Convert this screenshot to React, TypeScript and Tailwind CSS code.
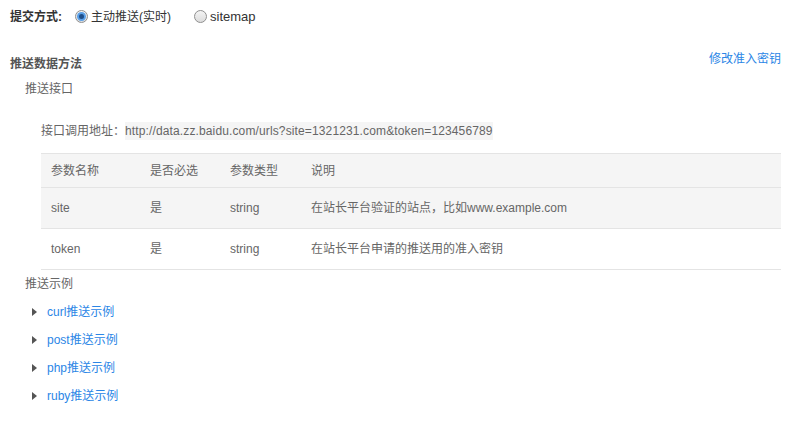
import React from "react";

const font = { fontFamily: '"Liberation Sans", Arial, "Noto Sans CJK SC", sans-serif' };

function Radio({ checked }: { checked?: boolean }) {
  return (
    <span className="inline-flex items-center justify-center w-[13px] h-[13px] rounded-full border border-[#8f8f8f] bg-gradient-to-b from-[#f4f4f4] to-[#dcdcdc]">
      {checked && <span className="w-[5px] h-[5px] rounded-full bg-[#1f4f8a] ring-2 ring-[#5aa0e8]" />}
    </span>
  );
}

function Caret() {
  return (
    <svg width="5" height="8" viewBox="0 0 5 8" className="shrink-0">
      <path d="M0 0 L5 4 L0 8 Z" fill="#555" />
    </svg>
  );
}

export default function App() {
  const rows = [
    ["site", "是", "string", "在站长平台验证的站点，比如www.example.com"],
    ["token", "是", "string", "在站长平台申请的推送用的准入密钥"],
  ];
  return (
    <div className="w-[803px] h-[429px] bg-white text-[12px] text-[#666]" style={font}>
      <div className="flex items-center h-[33px] pl-[10px]">
        <span className="font-bold text-[#333] w-[65px]">提交方式:</span>
        <label className="flex items-center gap-[3px] text-[#333]">
          <Radio checked />
          <span>主动推送(实时)</span>
        </label>
        <label className="flex items-center gap-[3px] ml-[23px] text-[#333]">
          <Radio />
          <span className="text-[13px]">sitemap</span>
        </label>
      </div>
      <div className="flex justify-between items-start pl-[10px] pr-[22px] mt-[17px]">
        <span className="font-bold text-[#555] mt-[5px]">推送数据方法</span>
        <span className="text-[#2b86e6]">修改准入密钥</span>
      </div>
      <div className="pl-[25px] mt-[7px]">推送接口</div>
      <div className="pl-[41px] mt-[24px] flex items-center">
        <span className="w-[84px]">接口调用地址：</span>
        <span className="bg-[#f5f5f5] tracking-[0.13px]">http://data.zz.baidu.com/urls?site=1321231.com&amp;token=123456789</span>
      </div>
      <div className="ml-[41px] mr-[22px] mt-[13px] border-t border-[#e4e4e4]">
        <div className="flex items-center h-[34px] bg-[#f5f5f5] border-b border-[#e4e4e4]">
          <span className="w-[109px] pl-[10px]">参数名称</span>
          <span className="w-[80px]">是否必选</span>
          <span className="w-[81px]">参数类型</span>
          <span>说明</span>
        </div>
        {rows.map((r, i) => (
          <div key={r[0]} className={`flex items-center h-[41px] border-b border-[#e4e4e4] ${i === 0 ? "bg-[#f5f5f5]" : "bg-white"}`}>
            <span className="w-[109px] pl-[10px]">{r[0]}</span>
            <span className="w-[80px]">{r[1]}</span>
            <span className="w-[81px]">{r[2]}</span>
            <span>{r[3]}</span>
          </div>
        ))}
      </div>
      <div className="pl-[25px] mt-[5px]">推送示例</div>
      <div className="pl-[32px] mt-[12px] flex flex-col gap-[14px]">
        {["curl", "post", "php", "ruby"].map((k) => (
          <div key={k} className="flex items-center gap-[10px] h-[14px]">
            <Caret />
            <span className="text-[#2b86e6]">{k}推送示例</span>
          </div>
        ))}
      </div>
    </div>
  );
}
